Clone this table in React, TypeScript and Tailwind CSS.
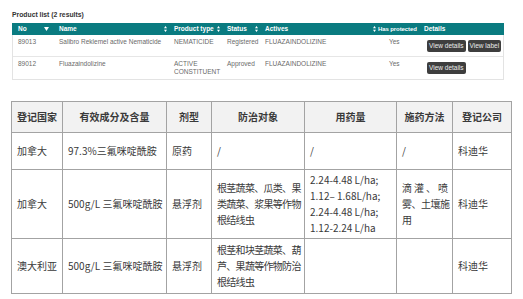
import React from 'react';

function SortIcon() {
  return (
    <svg width="3" height="6" viewBox="0 0 3 6" className="shrink-0">
      <path d="M1.5 0 L3 2.2 L0 2.2 Z M1.5 6 L3 3.8 L0 3.8 Z" fill="#ffffff" />
    </svg>
  );
}

function DownIcon() {
  return (
    <svg width="5" height="4" viewBox="0 0 5 4" className="shrink-0">
      <path d="M0 0 L5 0 L2.5 4 Z" fill="#ffffff" />
    </svg>
  );
}

function Btn({ children }: { children: React.ReactNode }) {
  return (
    <span className="inline-flex h-[12px] items-center whitespace-nowrap rounded-[2px] bg-[#3e3e3e] px-[2px] text-[6.5px] leading-none text-[#ececec]">
      {children}
    </span>
  );
}

const productRows = [
  {
    no: '89013',
    name: 'Salibro Reklemel active Nematicide',
    type: ['NEMATICIDE'],
    status: 'Registered',
    actives: 'FLUAZAINDOLIZINE',
    prot: 'Yes',
    label: true,
  },
  {
    no: '89012',
    name: 'Fluazaindolizine',
    type: ['ACTIVE', 'CONSTITUENT'],
    status: 'Approved',
    actives: 'FLUAZAINDOLIZINE',
    prot: 'Yes',
    label: false,
  },
];

const cols = 'grid grid-cols-[41px_115px_53px_38px_117px_45px_83px]';

function ProductList() {
  return (
    <div className="pl-[12px] pt-[10px] font-['Liberation_Sans',Arial,sans-serif]">
      <div className="h-[10px] text-[6.8px] font-bold leading-[10px] text-[#333]">
        Product list (2 results)
      </div>
      <div className="mt-[3px] w-[492px]">
        {/* header */}
        <div className={`${cols} h-[12px] items-center whitespace-nowrap bg-[#0a7b80] text-[6.5px] font-bold leading-none text-white`}>
          <div className="flex items-center justify-between pl-[6px] pr-[4px]">
            <span>No</span>
            <DownIcon />
          </div>
          <div className="flex items-center justify-between pl-[6px] pr-[1px]">
            <span>Name</span>
            <SortIcon />
          </div>
          <div className="flex items-center justify-between pl-[6px] pr-[1px]">
            <span>Product type</span>
            <SortIcon />
          </div>
          <div className="flex items-center justify-between pl-[6px] pr-[1px]">
            <span>Status</span>
            <SortIcon />
          </div>
          <div className="flex items-center justify-between pl-[6px]">
            <span>Actives</span>
            <SortIcon />
          </div>
          <div className="pl-[2px] text-[6px] tracking-[-0.1px]">Has protected</div>
          <div className="pl-[3px]">Details</div>
        </div>
        {/* rows */}
        <div className="border-x border-b border-[#e3e3e3]">
          {productRows.map((r, i) => (
            <div
              key={r.no}
              className={`${cols} h-[22px] text-[6.5px] leading-[8px] text-[#6a6a6a] ${i === 0 ? 'border-b border-[#e6e6e6]' : ''}`}
            >
              <div className="pl-[5px] pt-[3px]">{r.no}</div>
              <div className="pl-[5px] pt-[3px]">{r.name}</div>
              <div className="pl-[5px] pt-[3px]">
                {r.type.map((t) => (
                  <div key={t}>{t}</div>
                ))}
              </div>
              <div className="pl-[5px] pt-[3px]">{r.status}</div>
              <div className="pl-[5px] pt-[3px]">{r.actives}</div>
              <div className="pl-[12px] pt-[3px]">{r.prot}</div>
              <div className="flex gap-[2px] pl-[5px] pt-[5px]">
                <Btn>View details</Btn>
                {r.label && <Btn>View label</Btn>}
              </div>
            </div>
          ))}
        </div>
      </div>
    </div>
  );
}

const th = 'border border-[#a3a3a3] bg-[#f2f2f2] text-center font-bold align-middle';
const td = 'border border-[#a3a3a3] px-[5px] align-middle text-left';

function RegTable() {
  return (
    <div className="pl-[11px] pt-[21px] font-['Noto_Sans_CJK_SC','Noto_Sans',sans-serif]">
      <table className="w-[500px] table-fixed border-collapse text-[10px] leading-[16px] text-[#3a3a3a]">
        <colgroup>
          <col className="w-[51px]" />
          <col className="w-[104px]" />
          <col className="w-[45px]" />
          <col className="w-[93px]" />
          <col className="w-[92px]" />
          <col className="w-[56px]" />
          <col className="w-[59px]" />
        </colgroup>
        <thead>
          <tr className="h-[31px]">
            <th className={th}>登记国家</th>
            <th className={th}>有效成分及含量</th>
            <th className={th}>剂型</th>
            <th className={th}>防治对象</th>
            <th className={th}>用药量</th>
            <th className={th}>施药方法</th>
            <th className={th}>登记公司</th>
          </tr>
        </thead>
        <tbody className="whitespace-nowrap">
          <tr className="h-[37px]">
            <td className={td}>加拿大</td>
            <td className={td}>97.3%三氟咪啶酰胺</td>
            <td className={td}>原药</td>
            <td className={td}>/</td>
            <td className={td}>/</td>
            <td className={td}>/</td>
            <td className={td}>科迪华</td>
          </tr>
          <tr className="h-[69px]">
            <td className={td}>加拿大</td>
            <td className={td}>500g/L 三氟咪啶酰胺</td>
            <td className={td}>悬浮剂</td>
            <td className={`${td} tracking-[-0.7px]`}>
              根茎蔬菜、瓜类、果
              <br />
              类蔬菜、浆果等作物
              <br />
              根结线虫
            </td>
            <td className={td}>
              2.24-4.48 L/ha;
              <br />
              1.12– 1.68L/ha;
              <br />
              2.24-4.48 L/ha;
              <br />
              1.12-2.24 L/ha
            </td>
            <td className={`${td} tracking-[-0.5px]`}>
              <span className="tracking-[2px]">滴灌、喷</span>
              <br />
              雾、土壤施
              <br />
              用
            </td>
            <td className={td}>科迪华</td>
          </tr>
          <tr className="h-[55px]">
            <td className={td}>澳大利亚</td>
            <td className={td}>500g/L 三氟咪啶酰胺</td>
            <td className={td}>悬浮剂</td>
            <td className={`${td} tracking-[-0.7px]`}>
              根茎和块茎蔬菜、葫
              <br />
              芦、果蔬等作物防治
              <br />
              根结线虫
            </td>
            <td className={td}></td>
            <td className={td}></td>
            <td className={td}>科迪华</td>
          </tr>
        </tbody>
      </table>
    </div>
  );
}

export default function App() {
  return (
    <div className="h-[299px] w-[523px] overflow-hidden bg-white">
      <ProductList />
      <RegTable />
    </div>
  );
}
